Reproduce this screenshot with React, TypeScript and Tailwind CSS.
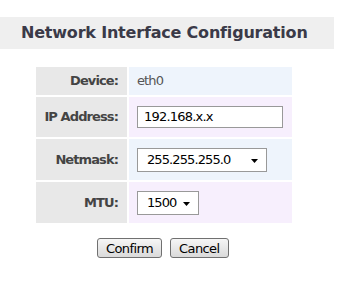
import React from 'react';

const FONT = "font-['DejaVu_Sans',Verdana,sans-serif]";

function Arrow() {
  return (
    <svg width="7" height="4" viewBox="0 0 7 4" className="block">
      <polygon points="0,0 7,0 3.5,4" fill="#000" />
    </svg>
  );
}

function Select({ value, width }: { value: string; width: string }) {
  return (
    <div className={`flex h-[24px] ${width} items-center justify-between border border-[#999] bg-white pl-[9px] pr-[8px] text-[13px] tracking-[-0.9px] text-black`}>
      <span>{value}</span>
      <span className="pt-[2px]"><Arrow /></span>
    </div>
  );
}

function Row({ label, height, bg, children }: { label: string; height: string; bg: string; children: React.ReactNode }) {
  return (
    <div className={`flex gap-[2px] ${height}`}>
      <div className="flex w-[91px] items-center justify-end whitespace-nowrap bg-[#e8e8e8] pr-[9px] text-[13px] font-bold tracking-[-0.9px] text-[#444]">
        {label}
      </div>
      <div className={`flex w-[163px] items-center pl-[8px] ${bg}`}>{children}</div>
    </div>
  );
}

function Btn({ children }: { children: React.ReactNode }) {
  return (
    <button className="h-[20px] rounded-[3px] border border-[#707070] bg-gradient-to-b from-[#f6f6f6] to-[#dadada] px-[8px] text-[13px] leading-none tracking-[-0.6px] text-black">
      {children}
    </button>
  );
}

export default function App() {
  return (
    <div className={`h-[287px] w-[337px] bg-white ${FONT}`}>
      <div className="pt-[17px]">
        <div className="flex h-[32px] w-[334px] items-center bg-[#efefef] pl-[21px] text-[16px] font-bold tracking-[-0.2px] text-[#3a3a48]">
          Network Interface Configuration
        </div>
      </div>

      <div className="ml-[36px] mt-[18px] flex w-[256px] flex-col gap-[2px]">
        <Row label="Device:" height="h-[28px]" bg="bg-[#eef4fc]">
          <span className="text-[13px] tracking-[-0.9px] text-[#555]">eth0</span>
        </Row>
        <Row label="IP Address:" height="h-[40px]" bg="bg-[#f7effd]">
          <div className="flex h-[22px] w-[146px] items-center border border-[#999] bg-white pl-[6px] text-[13px] tracking-[-0.8px] text-black">
            192.168.x.x
          </div>
        </Row>
        <Row label="Netmask:" height="h-[41px]" bg="bg-[#eef4fc]">
          <Select value="255.255.255.0" width="w-[130px]" />
        </Row>
        <Row label="MTU:" height="h-[41px]" bg="bg-[#f7effd]">
          <Select value="1500" width="w-[62px]" />
        </Row>
      </div>

      <div className="ml-[97px] mt-[15px] flex gap-[8px]">
        <Btn>Confirm</Btn>
        <Btn>Cancel</Btn>
      </div>
    </div>
  );
}
